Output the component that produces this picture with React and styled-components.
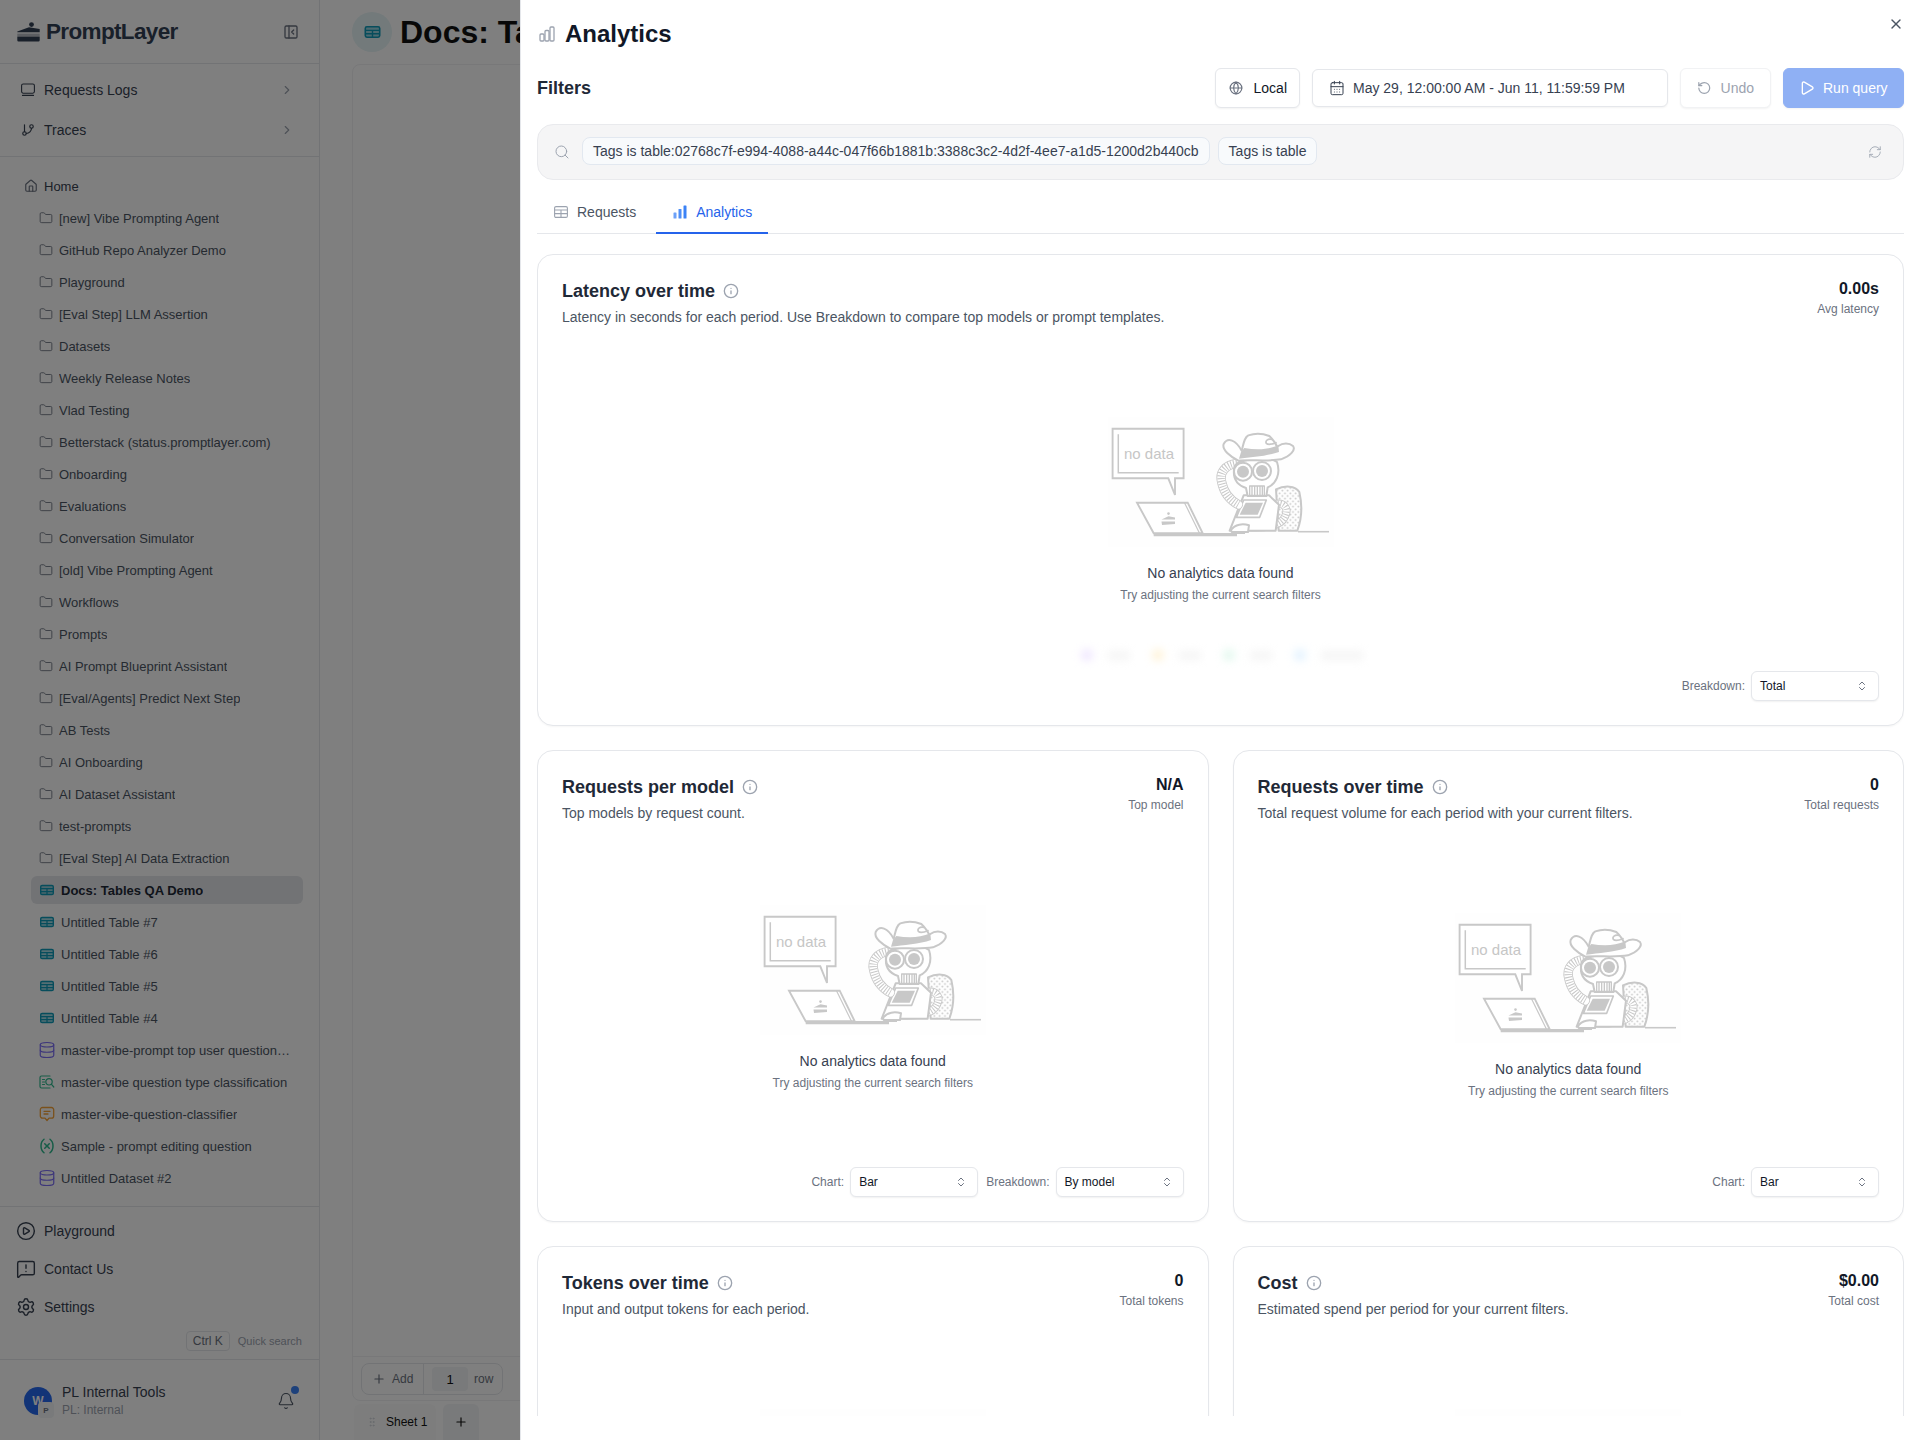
import React from "react";
import styled, { createGlobalStyle } from "styled-components";
import {
  CalendarDays, ChevronRight, ChevronsUpDown, Database, Folder, GitBranch, Globe, Home,
  Info, PanelLeftClose, Play, RefreshCw, RotateCcw, Search, Settings, Bell, Plus, X, CirclePlay,
  MessageSquareWarning, Variable, GripVertical
} from "lucide-react";

const Global = createGlobalStyle`
  html, body { margin: 0; padding: 0; background: #fff; overflow: hidden; }
  body { font-family: "Liberation Sans", Arial, sans-serif; color: #111827; }
  * { box-sizing: border-box; }
`;

const Page = styled.div`
  position: relative; width: 1920px; height: 1440px; overflow: hidden; display: flex; background: #fff;
`;

/* ---------- Sidebar ---------- */
const Sidebar = styled.aside`
  width: 320px; height: 1440px; flex: none; display: flex; flex-direction: column;
  border-right: 1px solid #e5e7eb; background: #fff;
`;
const SideHead = styled.div`
  height: 64px; display: flex; align-items: center; justify-content: space-between;
  padding: 0 20px 0 17px; border-bottom: 1px solid #e5e7eb; color: #6b7280;
`;
const Brand = styled.div`display: flex; align-items: center; gap: 6px;`;
const BrandName = styled.span`font-size: 22.5px; font-weight: 700; letter-spacing: -0.65px; color: #334155;`;
const NavGroup = styled.nav`
  padding: 6px 0; border-bottom: 1px solid #e5e7eb;
`;
const NavRow = styled.div`
  height: 40px; display: flex; align-items: center; padding: 0 25px 0 21px; gap: 9px;
  font-size: 14px; color: #374151;
  svg.lead { color: #374151; }
  svg.tail { margin-left: auto; color: #9ca3af; }
`;
const Tree = styled.div`padding: 13px 0 12px; border-bottom: 1px solid #e5e7eb;`;
const HomeRow = styled.div`
  height: 32px; display: flex; align-items: center; gap: 6px; padding-left: 24px;
  font-size: 13px; color: #374151; svg { color: #6b7280; }
`;
const TreeRow = styled.div`
  height: 32px; display: flex; align-items: center; gap: 6px; margin-left: 31px; width: 272px;
  padding: 0 12px 0 8px; font-size: 13px; white-space: nowrap; color: #4b5563;
  svg { flex: none; color: ${p => p.$tint || "#6b7280"}; }
`;
const ActiveBg = styled.div`
  height: 28px; width: 272px; display: flex; align-items: center; gap: 6px; padding-left: 8px;
  margin-left: -8px; flex: none; border-radius: 6px; background: #e5e7eb;
  font-weight: 700; color: #1f2937;
`;
const RowText = styled.span`overflow: hidden; text-overflow: ellipsis;`;
const WideGlyph = styled.span`display: inline-flex; margin: 0 -1px; flex: none;`;
const BottomNav = styled.div`padding-top: 5px;`;
const BottomRow = styled.div`
  height: 38px; display: flex; align-items: center; gap: 8px; padding-left: 16px;
  font-size: 14px; color: #374151; svg { color: #374151; }
`;
const QuickRow = styled.div`
  height: 34px; padding: 5px 17px 9px 0; display: flex; justify-content: flex-end; align-items: center; gap: 8px;
  font-size: 11px; color: #9ca3af; border-bottom: 1px solid #e5e7eb;
`;
const Kbd = styled.span`
  height: 20px; width: 44px; display: inline-flex; align-items: center; justify-content: center;
  border: 1px solid #e5e7eb; border-radius: 4px; font-size: 12px; color: #6b7280;
`;
const Profile = styled.div`
  flex: 1; display: flex; align-items: center; padding: 2px 0 0 24px; gap: 10px;
`;
const Avatar = styled.div`
  position: relative; width: 28px; height: 28px; border-radius: 50%; background: #2568ee; flex: none;
  color: #fff; font-size: 12px; font-weight: 700; display: flex; align-items: center; justify-content: center;
`;
const AvatarBadge = styled.span`
  position: absolute; right: -2px; bottom: -3px; width: 16px; height: 16px; border-radius: 4px;
  background: #f3f4f6; color: #6b7280; font-size: 8px; display: flex; align-items: center; justify-content: center;
`;
const ProfileText = styled.div`display: flex; flex-direction: column; line-height: 18px;`;
const ProfileName = styled.span`font-size: 14px; color: #374151;`;
const ProfileSub = styled.span`font-size: 12px; color: #9ca3af;`;
const BellWrap = styled.div`
  position: relative; margin-left: auto; margin-right: 24px; width: 18px; height: 18px; color: #4b5563;
`;
const BellDot = styled.span`
  position: absolute; right: -4px; top: -6px; width: 8px; height: 8px; border-radius: 50%; background: #3b82f6;
`;

/* ---------- Behind the drawer ---------- */
const Main = styled.main`flex: 1; display: flex; flex-direction: column; padding-left: 32px; min-width: 0;`;
const MainHead = styled.div`height: 64px; display: flex; align-items: center; gap: 8px;`;
const TitleBadge = styled.div`
  width: 40px; height: 40px; border-radius: 50%; background: #e6f4f6;
  display: flex; align-items: center; justify-content: center;
`;
const DocTitle = styled.h1`margin: 0; font-size: 32px; font-weight: 700; color: #111; white-space: nowrap;`;
const MainCard = styled.div`
  height: 1337px; border: 1px solid #f0f1f3; border-radius: 8px; display: flex; flex-direction: column; justify-content: flex-end;
`;
const MainFoot = styled.div`
  height: 44px; border-top: 1px solid #f0f1f3; padding: 6px 8px;
`;
const AddBox = styled.div`
  width: 142px; height: 32px; border: 1px solid #e5e7eb; border-radius: 8px; display: flex; align-items: center;
  font-size: 12px; color: #6b7280;
`;
const AddLabel = styled.div`
  width: 62px; height: 100%; display: flex; align-items: center; gap: 6px; padding-left: 10px; border-right: 1px solid #e5e7eb;
`;
const AddNum = styled.div`
  width: 36px; height: 24px; margin: 0 6px 0 8px; border-radius: 4px; background: #f3f4f6; color: #111;
  font-size: 13px; display: flex; align-items: center; justify-content: center;
`;
const Sheets = styled.div`display: flex; gap: 7px; padding: 3px 0 0 2px;`;
const SheetTab = styled.div`
  width: 82px; height: 36px; display: flex; align-items: center; gap: 8px; padding-left: 12px; background: #fbfbfb; border-radius: 6px 6px 0 0;
  font-size: 12px; color: #111; svg { color: #d1d5db; }
`;
const SheetAdd = styled.div`
  width: 36px; height: 36px; display: flex; align-items: center; justify-content: center; border-radius: 6px 6px 0 0;
  background: #f3f4f6; color: #111;
`;
const Overlay = styled.div`position: absolute; inset: 0; background: rgba(0,0,0,.5);`;

/* ---------- Drawer ---------- */
const Drawer = styled.section`
  position: absolute; top: 0; left: 520px; width: 1400px; height: 1440px; background: #fff;
  border-left: 1px solid #e5e7eb; padding: 0 16px 24px; display: flex; flex-direction: column;
`;
const CloseBtn = styled.button`
  position: absolute; top: 16px; right: 16px; border: 0; background: none; padding: 0; width: 16px; height: 16px; color: #4b5563;
`;
const DrawerTitle = styled.div`
  height: 32px; margin-top: 18px; display: flex; align-items: center; gap: 10px; padding-left: 2px;
`;
const DrawerH = styled.h2`margin: 0; font-size: 24px; line-height: 32px; font-weight: 700; color: #111827;`;
const FilterHead = styled.div`
  height: 40px; margin-top: 18px; display: flex; align-items: center; gap: 12px;
`;
const FilterLabel = styled.div`margin-right: auto; font-size: 18px; font-weight: 700; color: #1f2937;`;
const Btn = styled.button`
  height: 40px; padding: 0 13px; display: inline-flex; align-items: center; gap: 8px; font: inherit; font-size: 14px;
  color: #111827; background: #fff; border: 1px solid #e5e7eb; border-radius: 6px; white-space: nowrap;
  box-shadow: 0 1px 2px rgba(0,0,0,.05);
`;
const LocalBtn = styled(Btn)`gap: 11px; padding: 0 12px 0 13px; svg { color: #6b7280; }`;
const DateBtn = styled(Btn)`
  height: 38px; width: 356px; padding: 0 16px; color: #374151; border-width: 1.5px; svg { color: #374151; }
`;
const UndoBtn = styled(Btn)`
  width: 91px; padding: 0 16px; gap: 9px; color: #9ca3af; border-color: #f1f2f4; svg { color: #9ca3af; }
`;
const RunBtn = styled(Btn)`
  width: 121px; padding: 0 14px 0 15px; color: #fff; background: #8fb0f4; border-color: #8fb0f4;
`;
const FilterBar = styled.div`
  height: 56px; margin-top: 16px; display: flex; align-items: center; gap: 8px; padding: 0 21px 0 16px;
  background: #f5f5f6; border: 1px solid #e9eaed; border-radius: 16px; color: #9ca3af;
  svg.refresh { margin-left: auto; }
`;
const SearchIcon = styled.span`display: inline-flex; margin-right: 4px;`;
const Chip = styled.span`
  height: 28px; margin-bottom: 3px; padding: 0 10px; display: inline-flex; align-items: center; font-size: 14px; color: #374151;
  background: #f8fafc; border: 1px solid #e2e8f0; border-radius: 8px; white-space: nowrap;
`;
const Tabs = styled.div`
  height: 44px; margin-top: 10px; padding-left: 1px; display: flex; gap: 4px; border-bottom: 1px solid #e5e7eb; align-items: stretch;
`;
const Tab = styled.div`
  padding: 2px 16px 0; display: flex; align-items: center; gap: ${p => (p.$active ? "8px" : "9px")}; font-size: 14px; height: 44px;
  color: ${p => (p.$active ? "#2563eb" : "#4b5563")};
  border-bottom: 2px solid ${p => (p.$active ? "#2563eb" : "transparent")};
  svg { color: ${p => (p.$active ? "#3b82f6" : "#9ca3af")}; }
`;
const Scroll = styled.div`flex: 1; min-height: 0; margin-top: 20px; overflow: hidden;`;
const Grid = styled.div`display: grid; grid-template-columns: 1fr 1fr; gap: 24px;`;
const Card = styled.article`
  grid-column: ${p => (p.$wide ? "1 / -1" : "auto")};
  height: 472px; padding: 24px; display: flex; flex-direction: column; background: #fff;
  border: 1px solid #e5e7eb; border-radius: 16px; box-shadow: 0 1px 2px rgba(0,0,0,.04);
`;
const CardHead = styled.header`display: flex; justify-content: space-between; align-items: flex-start;`;
const CardTitleRow = styled.div`
  display: flex; align-items: center; gap: 8px; svg { color: #9ca3af; }
`;
const CardTitle = styled.h3`margin: 0; font-size: 18px; line-height: 24px; font-weight: 700; color: #1f2937;`;
const CardDesc = styled.p`margin: 4px 0 0; font-size: 14px; line-height: 20px; color: #4b5563;`;
const Stat = styled.div`text-align: right; padding-top: 1px;`;
const StatValue = styled.div`font-size: 16px; line-height: 18px; font-weight: 700; color: #111827;`;
const StatLabel = styled.div`margin-top: 3px; font-size: 12px; line-height: 16px; color: #6b7280;`;
const Empty = styled.div`
  margin-top: ${p => (p.$lift ? "82px" : "90px")}; display: flex; flex-direction: column; align-items: center;
`;
const EmptyTitle = styled.div`margin-top: 16px; font-size: 14px; line-height: 20px; color: #374151;`;
const EmptySub = styled.div`margin-top: 4px; font-size: 12px; line-height: 16px; color: #6b7280;`;
const Legend = styled.div`
  display: flex; justify-content: center; gap: 15px; margin-top: 46px; padding-left: 10px; filter: blur(4px); align-items: center;
`;
const LegendDot = styled.span`width: 12px; height: 12px; border-radius: 50%; background: ${p => p.$c};`;
const LegendBar = styled.span`width: ${p => p.$w}px; height: 9px; background: #f5f5f5; margin-right: 7px;`;
const CardFoot = styled.footer`
  margin-top: auto; display: flex; justify-content: flex-end; align-items: center; gap: 8px;
`;
const SelectLabel = styled.span`font-size: 12px; color: #6b7280; margin-right: -2px;`;
const Select = styled.div`
  width: 128px; height: 30px; padding: 0 10px 0 8px; display: flex; align-items: center; justify-content: space-between;
  background: #fff; border: 1px solid #e5e7eb; border-radius: 6px; box-shadow: 0 1px 2px rgba(0,0,0,.06);
  font-size: 12px; color: #111827; svg { color: #6b7280; }
`;

/* ---------- Drawings ---------- */
const TableIcon = ({ w = 16, h = 14, c = "#0e9ab8" }) => (
  <svg width={w} height={h} viewBox="-1 -2 18 16" style={{ color: c }}>
    <rect x=".8" y=".8" width="14.4" height="10.4" rx="1.6" fill="currentColor" fillOpacity=".35" stroke="currentColor" strokeWidth="1.6" />
    <path d="M1 4.4h14M1 7.8h14M8 4.4v7" stroke="currentColor" strokeWidth="1.4" />
  </svg>
);
const QueryIcon = () => (
  <svg width="16" height="14" viewBox="0 0 16 14" fill="none" stroke="#2fb98f" strokeWidth="1.2" strokeLinecap="round">
    <path d="M11 1H2.5A1.5 1.5 0 0 0 1 2.5v9A1.5 1.5 0 0 0 2.5 13H11" />
    <path d="M3.5 4.5h2M3.5 7h2M3.5 9.5h2" />
    <circle cx="10" cy="6.8" r="3.2" />
    <path d="M12.5 9.3l2.3 2.7" />
  </svg>
);
const PromptIcon = () => (
  <svg width="16" height="16" viewBox="0 0 16 16" fill="none" stroke="#f5a238" strokeWidth="1.3" strokeLinecap="round" strokeLinejoin="round">
    <path d="M3.5 1.5h9a2.2 2.2 0 0 1 2.2 2.2v6.2a2.2 2.2 0 0 1-2.2 2.2H10L8 14.5l-2-2.4H3.5a2.2 2.2 0 0 1-2.2-2.2V3.7a2.2 2.2 0 0 1 2.2-2.2z" />
    <path d="M5 5.3h6M5 8h4" />
  </svg>
);
const LaptopIcon = () => (
  <svg className="lead" width="14" height="14" viewBox="0 0 14 14" fill="none" stroke="currentColor" strokeWidth="1.1" strokeLinecap="round">
    <rect x=".6" y="1" width="12.8" height="9.2" rx="1.6" />
    <path d="M1.5 12.4h11" />
  </svg>
);
const LogoIcon = () => (
  <svg width="23" height="20" viewBox="0 0 23 20" fill="#334155">
    <circle cx="14.5" cy="2.6" r="2.4" />
    <path d="M.3 9.5 12 5.2l10.7 1.7v3.4H.3z" />
    <path d="M.3 11.6h22.4v2.4H.3z" opacity=".35" />
    <path d="M.3 14.6h22.4v3.6a1.2 1.2 0 0 1-1.2 1.2H1.5a1.2 1.2 0 0 1-1.2-1.2z" />
  </svg>
);
const DrawerIcon = () => (
  <svg width="16" height="16" viewBox="0 0 16 16" fill="none" stroke="#9ca3af" strokeWidth="1.3">
    <rect x="1" y="8" width="4" height="7" rx="1" />
    <rect x="6" y="4.5" width="4" height="10.5" rx="1" />
    <rect x="11" y="1" width="4" height="14" rx="1" />
  </svg>
);
const BarsIcon = () => (
  <svg width="16" height="16" viewBox="0 0 16 16" fill="currentColor">
    <rect x="1.5" y="8.5" width="3" height="6" rx=".6" opacity=".75" />
    <rect x="6.5" y="5" width="3" height="9.5" rx=".6" opacity=".9" />
    <rect x="11.5" y="1.5" width="3" height="13" rx=".6" />
  </svg>
);
const RowsIcon = () => (
  <svg width="14" height="12" viewBox="0 0 14 12" fill="none" stroke="currentColor" strokeWidth="1.1">
    <rect x=".6" y=".6" width="12.8" height="10.8" rx="1.4" />
    <path d="M.6 4h12.8M.6 7.6h12.8M7 4v7.4" />
  </svg>
);

const G = "#c8c8c8";
const LEFT_ARM = "M108 130c-34 4-54 26-46 56 6 30 24 54 50 68";
const RIGHT_ARM = "M222 252c28-6 42 14 30 38-10 24-50 36-112 32";
const Robot = () => (
  <svg width="226" height="130" viewBox="0 0 226 130" fill="none" style={{ background: "#fefefe", flex: "none" }}>
    <defs>
      <pattern id="dots" width="16" height="16" patternUnits="userSpaceOnUse">
        <circle cx="4" cy="4" r="2.8" fill={G} />
        <circle cx="12" cy="12" r="2.8" fill={G} />
      </pattern>
    </defs>
    {/* speech bubble */}
    <path d="M4.6 11.7h71v49.6H67V78L60.3 61.3H4.6z" stroke={G} strokeWidth="1.9" fill="#fff" />
    <path d="M10.3 17.3v38.4h60.4" stroke={G} strokeWidth="1.5" />
    <text x="41" y="42" textAnchor="middle" fontFamily="'Liberation Sans', Arial, sans-serif" fontSize="15" fill="#c6c6c6">no data</text>
    {/* laptop */}
    <path d="M29 85.7h50.7l15 30.6h-49z" stroke={G} strokeWidth="1.9" fill="#fff" />
    <path d="M76.5 85.7l15 30.6" stroke={G} strokeWidth="1.2" />
    <path d="M45.7 118H129" stroke={G} strokeWidth="2.4" />
    <path d="M93 116.5h44" stroke={G} strokeWidth="1.2" />
    <g fill={G}>
      <circle cx="60.5" cy="96.6" r="1.3" />
      <path d="M53.5 102.5l7-3.2 6.5 1.2v2h-13.5z" />
      <path d="M53.5 104.5h13.5v2.6l-13 .8z" />
    </g>
    <path d="M190 114.7h31" stroke={G} strokeWidth="1.6" />
    {/* robot, drawn in a 3x grid */}
    <g transform="translate(93 3) scale(.3333)" strokeLinejoin="round" strokeLinecap="round">
      <path d="M225 208c25-12 58-12 70 8 10 42 6 84-6 116h-56z" fill="url(#dots)" stroke={G} strokeWidth="6" />
      <path d={RIGHT_ARM} stroke={G} strokeWidth="24" />
      <path d={RIGHT_ARM} stroke="#fff" strokeWidth="19" />
      <path d={RIGHT_ARM} stroke={G} strokeWidth="19" strokeDasharray="3 5" strokeLinecap="butt" />
      <path d="M128 226h76l30 28-10 78H86z" fill="#fff" stroke={G} strokeWidth="6" />
      <path d="M128 240h68l-20 52h-70z" stroke={G} strokeWidth="5" fill="#fff" />
      <path d="M134 248h52l-16 36h-54z" fill={G} />
      <path d="M90 330c12-18 36-20 54-14l-3 20H92z" fill="#fff" stroke={G} strokeWidth="6" />
      <path d={LEFT_ARM} stroke={G} strokeWidth="28" />
      <path d={LEFT_ARM} stroke="#fff" strokeWidth="23" />
      <path d={LEFT_ARM} stroke={G} strokeWidth="23" strokeDasharray="3 5" strokeLinecap="butt" />
      <path d="M100 142c5-26 100-36 128-16 12 36-3 66-28 76l-4 26h-56l-5-24c-30-10-40-34-35-62z" fill="#fff" stroke={G} strokeWidth="6" />
      <circle cx="126" cy="155" r="27" fill="#fff" stroke={G} strokeWidth="6" />
      <circle cx="126" cy="155" r="18" fill={G} />
      <circle cx="183" cy="153" r="27" fill="#fff" stroke={G} strokeWidth="6" />
      <circle cx="183" cy="153" r="18" fill={G} />
      <path d="M146 198h44v28h-44zM153 198v28M161 198v28M169 198v28M177 198v28M184 198v28" stroke={G} strokeWidth="4" />
      <path d="M122 92c6-22 8-40 20-46 23-8 48-4 63 2 13 12 20 22 27 40" fill="#fff" stroke={G} strokeWidth="6" />
      <path d="M122 92C105 60 80 50 68 72c-6 18 20 38 44 50 38-4 88 3 128-4 28-10 45-28 36-40-11-10-31-10-44 0" fill="#fff" stroke={G} strokeWidth="6" />
      <path d="M120 96l10-12c35 6 70 6 102-8l2 20c-34 12-84 16-120 20z" fill={G} />
      <path d="M212 58c-12-2-20 4-16 12 6 6 19 2 29-2" stroke={G} strokeWidth="5" />
    </g>
  </svg>
);

const folders = [
  "[new] Vibe Prompting Agent", "GitHub Repo Analyzer Demo", "Playground", "[Eval Step] LLM Assertion", "Datasets",
  "Weekly Release Notes", "Vlad Testing", "Betterstack (status.promptlayer.com)", "Onboarding", "Evaluations",
  "Conversation Simulator", "[old] Vibe Prompting Agent", "Workflows", "Prompts", "AI Prompt Blueprint Assistant",
  "[Eval/Agents] Predict Next Step", "AB Tests", "AI Onboarding", "AI Dataset Assistant", "test-prompts",
  "[Eval Step] AI Data Extraction",
];
const tables = ["Untitled Table #7", "Untitled Table #6", "Untitled Table #5", "Untitled Table #4"];
const Purple = "#7a6cf5";

const EmptyState = ({ lift }) => (
  <Empty $lift={lift}>
    <Robot />
    <EmptyTitle>No analytics data found</EmptyTitle>
    <EmptySub>Try adjusting the current search filters</EmptySub>
  </Empty>
);

const Control = ({ label, value }) => (
  <>
    <SelectLabel>{label}</SelectLabel>
    <Select>{value}<ChevronsUpDown size={12} /></Select>
  </>
);

const ChartCard = ({ wide, title, desc, value, stat, lift, children, controls }) => (
  <Card $wide={wide}>
    <CardHead>
      <div>
        <CardTitleRow><CardTitle>{title}</CardTitle><Info size={16} /></CardTitleRow>
        <CardDesc>{desc}</CardDesc>
      </div>
      <Stat><StatValue>{value}</StatValue><StatLabel>{stat}</StatLabel></Stat>
    </CardHead>
    <EmptyState lift={lift} />
    {children}
    {controls && <CardFoot>{controls}</CardFoot>}
  </Card>
);

export default function App() {
  return (
    <Page>
      <Global />
      <Sidebar>
        <SideHead>
          <Brand><LogoIcon /><BrandName>PromptLayer</BrandName></Brand>
          <PanelLeftClose size={16} />
        </SideHead>
        <NavGroup>
          <NavRow><LaptopIcon />Requests Logs<ChevronRight className="tail" size={14} /></NavRow>
          <NavRow><GitBranch className="lead" size={14} />Traces<ChevronRight className="tail" size={14} /></NavRow>
        </NavGroup>
        <Tree>
          <HomeRow><Home size={14} />Home</HomeRow>
          {folders.map(f => <TreeRow key={f}><Folder size={14} strokeWidth={1.5} /><RowText>{f}</RowText></TreeRow>)}
          <TreeRow $tint="#0e9ab8"><ActiveBg><TableIcon /><RowText>Docs: Tables QA Demo</RowText></ActiveBg></TreeRow>
          {tables.map(t => <TreeRow key={t} $tint="#0e9ab8"><TableIcon /><RowText>{t}</RowText></TreeRow>)}
          <TreeRow $tint={Purple}><WideGlyph><Database size={18} strokeWidth={1.6} /></WideGlyph><RowText>master-vibe-prompt top user question types</RowText></TreeRow>
          <TreeRow><QueryIcon /><RowText>master-vibe question type classification</RowText></TreeRow>
          <TreeRow><PromptIcon /><RowText>master-vibe-question-classifier</RowText></TreeRow>
          <TreeRow $tint="#2fb98f"><WideGlyph><Variable size={18} strokeWidth={2} /></WideGlyph><RowText>Sample - prompt editing question</RowText></TreeRow>
          <TreeRow $tint={Purple}><WideGlyph><Database size={18} strokeWidth={1.6} /></WideGlyph><RowText>Untitled Dataset #2</RowText></TreeRow>
        </Tree>
        <BottomNav>
          <BottomRow><CirclePlay size={20} strokeWidth={1.7} />Playground</BottomRow>
          <BottomRow><MessageSquareWarning size={20} strokeWidth={1.7} />Contact Us</BottomRow>
          <BottomRow><Settings size={20} strokeWidth={1.7} />Settings</BottomRow>
          <QuickRow><Kbd>Ctrl K</Kbd>Quick search</QuickRow>
        </BottomNav>
        <Profile>
          <Avatar>W<AvatarBadge>P</AvatarBadge></Avatar>
          <ProfileText><ProfileName>PL Internal Tools</ProfileName><ProfileSub>PL: Internal</ProfileSub></ProfileText>
          <BellWrap><Bell size={18} strokeWidth={1.5} /><BellDot /></BellWrap>
        </Profile>
      </Sidebar>

      <Main>
        <MainHead>
          <TitleBadge><TableIcon w={19} h={16} /></TitleBadge>
          <DocTitle>Docs: Tables QA Demo</DocTitle>
        </MainHead>
        <MainCard>
          <MainFoot>
            <AddBox>
              <AddLabel><Plus size={14} />Add</AddLabel>
              <AddNum>1</AddNum>row
            </AddBox>
          </MainFoot>
        </MainCard>
        <Sheets>
          <SheetTab><GripVertical size={12} />Sheet 1</SheetTab>
          <SheetAdd><Plus size={14} /></SheetAdd>
        </Sheets>
      </Main>

      <Overlay />

      <Drawer>
        <CloseBtn aria-label="Close"><X size={16} /></CloseBtn>
        <DrawerTitle><DrawerIcon /><DrawerH>Analytics</DrawerH></DrawerTitle>
        <FilterHead>
          <FilterLabel>Filters</FilterLabel>
          <LocalBtn><Globe size={14} />Local</LocalBtn>
          <DateBtn><CalendarDays size={16} strokeWidth={1.5} />May 29, 12:00:00 AM - Jun 11, 11:59:59 PM</DateBtn>
          <UndoBtn><RotateCcw size={16} />Undo</UndoBtn>
          <RunBtn><Play size={16} />Run query</RunBtn>
        </FilterHead>
        <FilterBar>
          <SearchIcon><Search size={16} strokeWidth={1.5} /></SearchIcon>
          <Chip>Tags is table:02768c7f-e994-4088-a44c-047f66b1881b:3388c3c2-4d2f-4ee7-a1d5-1200d2b440cb</Chip>
          <Chip>Tags is table</Chip>
          <RefreshCw className="refresh" size={14} strokeWidth={1.5} />
        </FilterBar>
        <Tabs>
          <Tab><RowsIcon />Requests</Tab>
          <Tab $active><BarsIcon />Analytics</Tab>
        </Tabs>
        <Scroll>
          <Grid>
            <ChartCard
              wide
              title="Latency over time"
              desc="Latency in seconds for each period. Use Breakdown to compare top models or prompt templates."
              value="0.00s"
              stat="Avg latency"
              controls={<Control label="Breakdown:" value="Total" />}
            >
              <Legend>
                <LegendDot $c="#efe6ff" /><LegendBar $w={22} />
                <LegendDot $c="#fff3d8" /><LegendBar $w={22} />
                <LegendDot $c="#e2f8ee" /><LegendBar $w={22} />
                <LegendDot $c="#e2f2ff" /><LegendBar $w={42} />
              </Legend>
            </ChartCard>
            <ChartCard
              lift
              title="Requests per model"
              desc="Top models by request count."
              value="N/A"
              stat="Top model"
              controls={<><Control label="Chart:" value="Bar" /><Control label="Breakdown:" value="By model" /></>}
            />
            <ChartCard
              title="Requests over time"
              desc="Total request volume for each period with your current filters."
              value="0"
              stat="Total requests"
              controls={<Control label="Chart:" value="Bar" />}
            />
            <ChartCard
              title="Tokens over time"
              desc="Input and output tokens for each period."
              value="0"
              stat="Total tokens"
            />
            <ChartCard
              title="Cost"
              desc="Estimated spend per period for your current filters."
              value="$0.00"
              stat="Total cost"
            />
          </Grid>
        </Scroll>
      </Drawer>
    </Page>
  );
}
